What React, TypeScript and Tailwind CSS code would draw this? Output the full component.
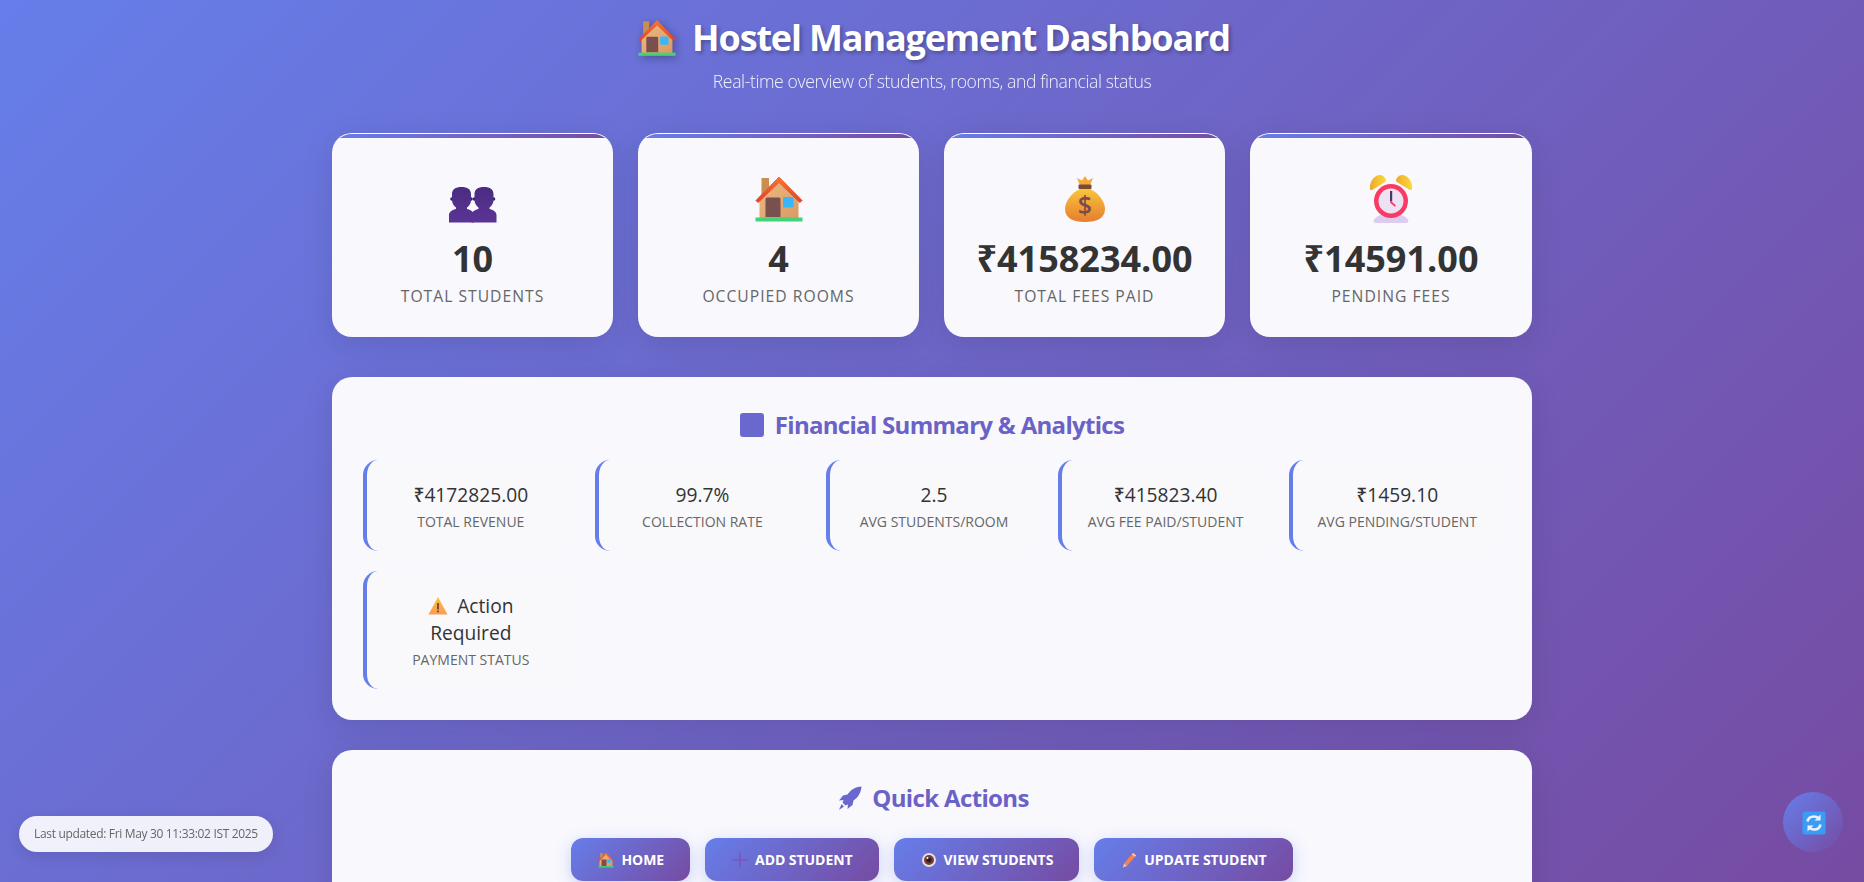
import type { ReactNode } from "react";

// Emoji are drawn by hand since no emoji font is available
function HouseIcon({ size }: { size: number }) {
  return (
    <svg width={size} height={size} viewBox="0 0 48 48">
      <defs>
        <linearGradient id="wall" x1="0" y1="0" x2="1" y2="1">
          <stop offset="0" stopColor="#eebb84" />
          <stop offset="1" stopColor="#d99a63" />
        </linearGradient>
        <linearGradient id="roof" x1="0" y1="0" x2="0" y2="1">
          <stop offset="0" stopColor="#f8752f" />
          <stop offset="1" stopColor="#e0402c" />
        </linearGradient>
      </defs>
      <rect x="6.5" y="3" width="7.5" height="20" fill="#c98f52" />
      <path d="M4.500 22 24 5 43.500 22V43H4.500Z" fill="url(#wall)" />
      <path d="M1 25.500 24 2 47 25.500 45 27.500 24 7.500 3 27.500Z" fill="url(#roof)" stroke="url(#roof)" strokeWidth="1" strokeLinejoin="round" />
      <path d="M10.500 24a1.500 1.500 0 0 1 1.500-1.500h12a1.500 1.500 0 0 1 1.500 1.500V42h-15Z" fill="#7a4f4f" />
      <rect x="28" y="22" width="10.500" height="10.500" rx="1" fill="#38b6f8" />
      <rect x="0.500" y="42.500" width="47" height="4" fill="#45d175" />
    </svg>
  );
}

function PeopleIcon() {
  return (
    <svg width={48} height={48} viewBox="0 0 48 48">
      <defs>
        <linearGradient id="ppl" x1="0" y1="0" x2="0" y2="1">
          <stop offset="0" stopColor="#4a2c82" />
          <stop offset="1" stopColor="#5b3495" />
        </linearGradient>
      </defs>
      {[0, 22.5].map((dx) => (
        <g key={dx} transform={`translate(${dx} 0)`} fill="url(#ppl)">
          <circle cx="3" cy="24" r="1.800" fill="#36205f" />
          <circle cx="22" cy="24" r="1.800" fill="#36205f" />
          <path d="M12.500 12c6 0 9.500 2.500 9.500 7v6c0 3.500-2 6-4 7.500v1.500c3 .8 7 2.500 7 6v7.500H0V40c0-3.500 4-5.200 7-6v-1.500C5 31 3 28.500 3 25v-6c0-4.500 3.500-7 9.500-7Z" />
        </g>
      ))}
    </svg>
  );
}

function MoneyBagIcon() {
  return (
    <svg width={48} height={48} viewBox="0 0 48 48">
      <defs>
        <linearGradient id="bag" x1="0" y1="0" x2="0" y2="1">
          <stop offset="0" stopColor="#f9c53c" />
          <stop offset="1" stopColor="#e67d2e" />
        </linearGradient>
      </defs>
      <path d="M16 3 21 5.500 24 1 27 5.500 32 3 29 10.500H19Z" fill="#f6a93b" />
      <rect x="17.500" y="9.500" width="13" height="4.500" rx="1" fill="#7a4a32" />
      <path d="M19 14h10C38 18 44 27 44 34c0 9-8 13-20 13S4 43 4 34c0-7 6-16 15-20Z" fill="url(#bag)" />
      <text x="24" y="39" textAnchor="middle" fontSize="25" fontWeight="600" fontFamily="'Open Sans', sans-serif" fill="#7d4a4a">$</text>
    </svg>
  );
}

function ClockIcon() {
  return (
    <svg width={48} height={48} viewBox="0 0 48 48">
      <defs>
        <linearGradient id="bell" x1="0" y1="0" x2="1" y2="0">
          <stop offset="0" stopColor="#efa92c" />
          <stop offset="1" stopColor="#fbd93c" />
        </linearGradient>
      </defs>
      <path d="M3 14C2 6 8 0 13 0c3 0 6 3 6 6 0 .5-.3.8-.8 1L6 14.500c-1.500.8-2.800.8-3-.5Z" fill="url(#bell)" />
      <path d="M45 14C46 6 40 0 35 0c-3 0-6 3-6 6 0 .5.3.8.8 1L42 14.500c1.500.8 2.800.8 3-.5Z" fill="url(#bell)" />
      <path d="M9 48c-2.500 0-3-2.500-1.500-4C11 40.500 16 38 24 38s13 2.500 16.500 6c1.500 1.500 1 4-1.500 4Z" fill="#dccdf0" />
      <circle cx="24" cy="26" r="17" fill="#fa3a62" />
      <circle cx="24" cy="26" r="12.500" fill="#ece2f3" />
      <path d="M23 16h2.200V26.500h-2.200Z" fill="#50365f" />
      <path d="M24 26 29 30.500 27.800 31.800 23 27.500Z" fill="#f5376a" />
    </svg>
  );
}

function WarningIcon() {
  return (
    <svg width={20} height={20} viewBox="0 0 20 20">
      <defs>
        <linearGradient id="warn" x1="0" y1="0" x2="0" y2="1">
          <stop offset="0" stopColor="#fbc13c" />
          <stop offset="1" stopColor="#fb9a52" />
        </linearGradient>
      </defs>
      <path d="M10 1 19.500 18.500H.5Z" fill="url(#warn)" />
      <rect x="9.200" y="7" width="1.600" height="6.500" fill="#5c3a36" />
      <rect x="9.200" y="14.500" width="1.600" height="1.800" fill="#5c3a36" />
    </svg>
  );
}

function RocketIcon() {
  return (
    <svg width={24} height={24} viewBox="0 0 24 24" fill="#6a68cf">
      <path d="M23.500 0.500C17 1 12.500 4 9.500 8.500L5 9.500 1 14.500 5.500 14 4.500 16.500 7.500 19.500 10 18.500 9.500 23 14.500 19 15.500 14.500C20 11.500 23 7 23.500 0.500Z" />
      <path d="M3.500 18 6 20.500 1 24Z" />
    </svg>
  );
}

function PlusIcon() {
  return (
    <svg width={16} height={16} viewBox="0 0 16 16">
      <rect x="7.200" y="0.500" width="1.600" height="15" fill="#7a55c0" />
      <rect x="0.500" y="7.200" width="15" height="1.600" fill="#7a55c0" />
    </svg>
  );
}

function EyeIcon() {
  return (
    <svg width={16} height={16} viewBox="0 0 16 16">
      <circle cx="8" cy="8" r="7" fill="#e4dfe6" />
      <circle cx="8" cy="8" r="5" fill="#7a3f38" />
      <circle cx="8" cy="8" r="2.500" fill="#2a1a22" />
      <circle cx="6.500" cy="6" r="1" fill="#ffffff" />
    </svg>
  );
}

function PencilIcon() {
  return (
    <svg width={16} height={16} viewBox="0 0 16 16">
      <path d="M12 1 15 3.500 6 14 3 11.500Z" fill="#f6824a" />
      <path d="M3 11.500 6 14 2 15.500Z" fill="#f3c9a0" />
      <path d="M12 1 15 3.500 14 4.800 11 2.300Z" fill="#fbd3c0" />
    </svg>
  );
}

function RefreshIcon() {
  return (
    <svg width={24} height={24} viewBox="0 0 24 24">
      <rect x="0.500" y="0.500" width="23" height="23" rx="2.500" fill="#3b9cf5" />
      <path d="M5.500 10.500C6 7.500 8.500 5.500 12 5.500c1.800 0 3.300.6 4.400 1.600" fill="none" stroke="#f4f0fb" strokeWidth="2.600" />
      <path d="M18.500 3.500v6h-6Z" fill="#f4f0fb" />
      <path d="M18.500 13.500c-.5 3-3 5-6.500 5-1.800 0-3.300-.6-4.400-1.600" fill="none" stroke="#f4f0fb" strokeWidth="2.600" />
      <path d="M5.500 20.500v-6h6Z" fill="#f4f0fb" />
    </svg>
  );
}

const STATS: { icon: ReactNode; value: string; label: string }[] = [
  { icon: <PeopleIcon />, value: "10", label: "Total Students" },
  { icon: <HouseIcon size={48} />, value: "4", label: "Occupied Rooms" },
  { icon: <MoneyBagIcon />, value: "₹4158234.00", label: "Total Fees Paid" },
  { icon: <ClockIcon />, value: "₹14591.00", label: "Pending Fees" },
];

const SUMMARY: { value: ReactNode; label: string }[] = [
  { value: "₹4172825.00", label: "Total Revenue" },
  { value: "99.7%", label: "Collection Rate" },
  { value: "2.5", label: "Avg Students/Room" },
  { value: "₹415823.40", label: "Avg Fee Paid/Student" },
  { value: "₹1459.10", label: "Avg Pending/Student" },
  {
    value: (
      <>
        <span className="inline-block align-[-3px] mr-[9px]">
          <WarningIcon />
        </span>
        Action Required
      </>
    ),
    label: "Payment Status",
  },
];

const ACTIONS: { icon: ReactNode; label: string }[] = [
  { icon: <HouseIcon size={16} />, label: "Home" },
  { icon: <PlusIcon />, label: "Add Student" },
  { icon: <EyeIcon />, label: "View Students" },
  { icon: <PencilIcon />, label: "Update Student" },
];

export default function App() {
  return (
    <div className="h-[882px] overflow-hidden bg-[linear-gradient(135deg,#667eea_0%,#764ba2_100%)] font-['Open_Sans','Noto_Sans',sans-serif]">
      <div className="w-[1200px] mx-auto">
        {/* Header */}
        <header className="pt-[14px] mb-[40px] text-center text-white">
          <h1 className="flex items-center justify-center gap-[16px] h-[48px] pl-[4px] text-[36px] font-bold tracking-[-1.15px] [text-shadow:2px_2px_4px_rgba(0,0,0,0.3)]">
            <span className="drop-shadow-[2px_2px_4px_rgba(0,0,0,0.3)]">
              <HouseIcon size={38} />
            </span>
            Hostel Management Dashboard
          </h1>
          <p className="mt-[7px] h-[24px] text-[17.6px] leading-[24px] font-light tracking-[-0.4px] opacity-90">
            Real-time overview of students, rooms, and financial status
          </p>
        </header>

        {/* Stat cards */}
        <section className="grid grid-cols-[281px_281px_281px_282px] gap-[25px] mb-[40px]">
          {STATS.map((s) => (
            <div
              key={s.label}
              className="h-[204px] rounded-[20px] overflow-hidden border-t border-white/80 bg-[#f8f8fd] shadow-[0_8px_32px_rgba(0,0,0,0.1)] text-center"
            >
              <div className="h-[4px] bg-gradient-to-r from-[#667eea] to-[#764ba2]" />
              <div className="flex justify-center mt-[37px] h-[48px]">{s.icon}</div>
              <div className="mt-[12px] text-[36px] leading-[48px] font-bold text-[#333]">{s.value}</div>
              <div className="mt-[3px] text-[15.7px] leading-[20px] font-medium uppercase tracking-[1px] text-[#666]">
                {s.label}
              </div>
            </div>
          ))}
        </section>

        {/* Financial summary */}
        <section className="rounded-[20px] bg-[#f8f8fd] px-[31px] pt-[30px] pb-[31px] mb-[30px] shadow-[0_8px_32px_rgba(0,0,0,0.1)]">
          <h2 className="flex items-center justify-center gap-[11px] h-[36px] mb-[17px] text-[24px] font-bold tracking-[-0.7px] text-[#6a62c6]">
            <span className="w-[24px] h-[24px] rounded-[3px] bg-[#6a68cf]" />
            Financial Summary &amp; Analytics
          </h2>
          <div className="grid grid-cols-5 gap-[20px]">
            {SUMMARY.map((s) => (
              <div key={s.label} className="rounded-[15px] border-l-4 border-[#667eea] bg-[#f9f9fc] px-[20px] pt-[21px] pb-[20px] text-center">
                <div className="text-[19.2px] leading-[27px] font-medium text-[#333]">{s.value}</div>
                <div className="mt-[4px] text-[14px] leading-[19px] uppercase text-[#666]">{s.label}</div>
              </div>
            ))}
          </div>
        </section>

        {/* Quick actions */}
        <section className="rounded-t-[20px] bg-[#f8f8fd] pt-[30px] pb-[30px] shadow-[0_8px_32px_rgba(0,0,0,0.1)]">
          <h2 className="flex items-center justify-center gap-[10px] h-[36px] mb-[22px] pl-[3px] text-[24px] font-bold tracking-[-0.65px] text-[#6a62c6]">
            <RocketIcon />
            Quick Actions
          </h2>
          <div className="flex justify-center gap-[15px]">
            {ACTIONS.map((a) => (
              <button
                key={a.label}
                className="flex items-center gap-[7px] h-[43px] pl-[27px] pr-[26px] rounded-[12px] bg-[linear-gradient(135deg,#667eea_0%,#764ba2_100%)] text-[14px] font-bold uppercase tracking-[-0.06px] text-white shadow-[0_4px_15px_rgba(102,126,234,0.3)]"
              >
                {a.icon}
                {a.label}
              </button>
            ))}
          </div>
        </section>
      </div>

      {/* Fixed overlays */}
      <div className="fixed left-[19px] bottom-[30px] h-[36px] px-[15px] flex items-center rounded-[20px] bg-white/90 text-[12px] tracking-[-0.33px] text-[#666] shadow-[0_4px_15px_rgba(0,0,0,0.1)]">
        Last updated: Fri May 30 11:33:02 IST 2025
      </div>
      <button className="fixed right-[21px] bottom-[30px] w-[60px] h-[60px] flex items-center justify-center rounded-full bg-[linear-gradient(135deg,#667eea_0%,#764ba2_100%)]">
        <span className="ml-[1px] mt-[2px]">
          <RefreshIcon />
        </span>
      </button>
    </div>
  );
}
